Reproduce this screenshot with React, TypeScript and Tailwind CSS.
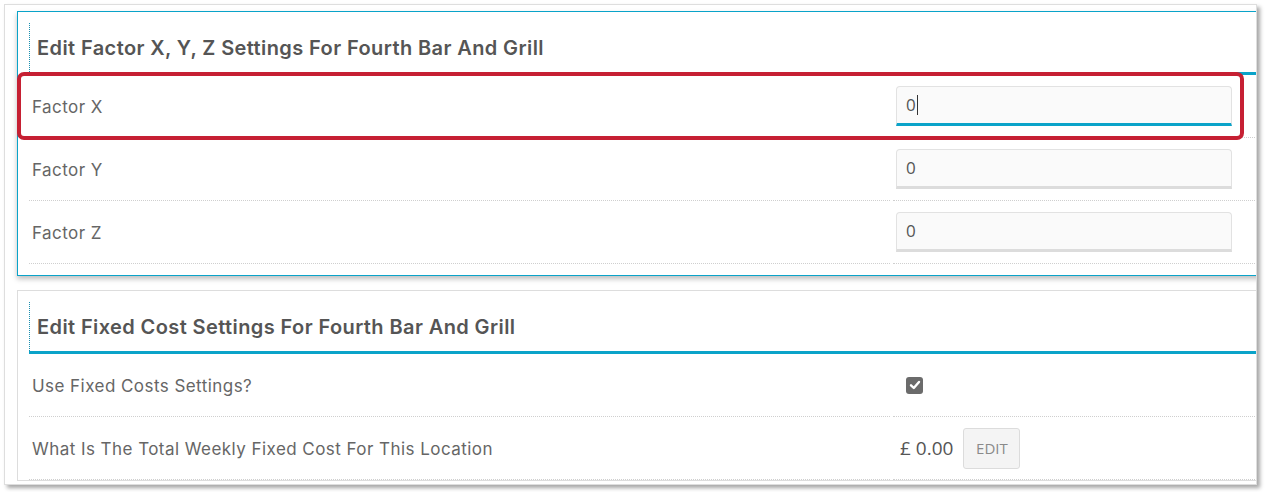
const font = { fontFamily: 'Inter, "Noto Sans", sans-serif' };

const Row = ({ label, children }: { label: string; children: React.ReactNode }) => (
    <div className="flex h-[63px] items-stretch">
        <div className="w-[861px] shrink-0 border-b border-dotted border-[#cfcfcf] flex items-center pl-[3px] pt-[4px] text-[17px] tracking-[0.45px] text-[#666]">
            {label}
        </div>
        <div className="w-[3px] shrink-0" />
        <div className="flex-1 border-b border-dotted border-[#cfcfcf] flex items-center">{children}</div>
    </div>
);

const FactorInput = ({ focused }: { focused?: boolean }) => (
    <div
        className={`ml-[3px] w-[336px] h-[40px] bg-[#fafafa] border border-[#e2e2e2] rounded-t-[4px] flex items-center pl-[9px] text-[17px] text-[#555] ${
            focused ? 'border-b-[3px] border-b-[#0aa3c9]' : 'border-b-[3px] border-b-[#dcdcdc]'
        }`}
        style={{ fontFamily: '"Open Sans", sans-serif' }}
    >
        <span>0</span>
        {focused && <span className="inline-block w-px h-[20px] bg-[#333] ml-px" />}
    </div>
);

const Header = ({ title }: { title: string }) => (
    <div className="h-[52px] border-b-[3px] border-[#0aa3c9] flex">
        <div className="h-[49px] border-l border-dotted border-[#1a8fb0] pl-[7px] flex items-center text-[20px] font-semibold text-[#555] tracking-[0.4px]">
            {title}
        </div>
    </div>
);

export default function App() {
    return (
        <div className="w-[1265px] h-[492px] bg-white relative" style={font}>
            <div className="absolute left-[4px] top-[4px] w-[1253px] h-[481px] border border-[#dedede] bg-white overflow-hidden shadow-[3px_3px_4px_rgba(0,0,0,0.35)]">
                <div className="pl-[12px] pt-[6px] flex flex-col">
                    <div className="w-[1260px] border border-[#0aa3c9] bg-white px-[11px] pt-[11px] pb-[11px] shadow-[0_3px_5px_rgba(0,0,0,0.25)]">
                        <Header title="Edit Factor X, Y, Z Settings For Fourth Bar And Grill" />
                        <Row label="Factor X">
                            <FactorInput focused />
                        </Row>
                        <Row label="Factor Y">
                            <FactorInput />
                        </Row>
                        <Row label="Factor Z">
                            <FactorInput />
                        </Row>
                    </div>
                    <div className="mt-[14px] w-[1260px] border border-[#dddddd] bg-white px-[11px] pt-[11px]">
                        <Header title="Edit Fixed Cost Settings For Fourth Bar And Grill" />
                        <Row label="Use Fixed Costs Settings?">
                            <div className="ml-[13px] w-[17px] h-[17px] rounded-[3px] bg-[#6b6b6b] flex items-center justify-center">
                                <svg width="12" height="12" viewBox="0 0 12 12">
                                    <path d="M2 6.3 L4.8 9 L10 3" fill="none" stroke="white" strokeWidth="2.4" strokeLinecap="round" strokeLinejoin="round" />
                                </svg>
                            </div>
                        </Row>
                        <Row label="What Is The Total Weekly Fixed Cost For This Location">
                            <div className="flex items-center ml-[7px]" style={{ fontFamily: '"Open Sans", sans-serif' }}>
                                <span className="text-[19px] text-[#555]">£ 0.00</span>
                                <button className="ml-[10px] w-[57px] h-[41px] bg-[#f4f4f4] border border-[#dcdcdc] rounded-[3px] text-[15px] text-[#8a8a8a]">
                                    EDIT
                                </button>
                            </div>
                        </Row>
                    </div>
                </div>
            </div>
            <div className="absolute left-[17px] top-[72px] w-[1227px] h-[68px] border-[4px] border-[#c62033] rounded-[7px] pointer-events-none" />
        </div>
    );
}
